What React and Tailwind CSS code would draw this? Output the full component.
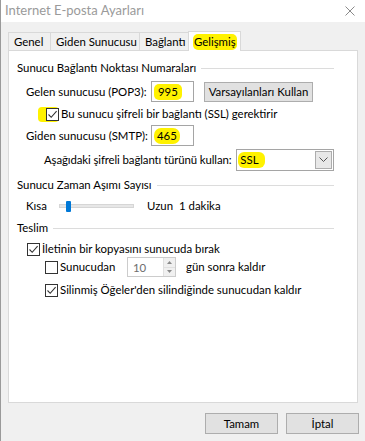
import React from 'react';

// Small building blocks for the Windows-style dialog
function Check({ checked }) {
  return (
    <span className="w-[13px] h-[13px] border border-[#333] bg-white flex items-center justify-center shrink-0">
      {checked && (
        <svg width="11" height="11" viewBox="0 0 11 11">
          <path d="M1.5 5.5 L4.2 8.3 L9.6 2.2" fill="none" stroke="#333" strokeWidth="1.1" />
        </svg>
      )}
    </span>
  );
}

function GroupHeader({ children }) {
  return (
    <div className="flex items-center h-[16px]">
      <span>{children}</span>
      <div className="flex-1 h-px bg-[#dcdcdc] ml-[5px]" />
    </div>
  );
}

function Mark({ children, className = '' }) {
  return <span className={`bg-[#fff200] rounded-[5px] leading-[16px] ${className}`}>{children}</span>;
}

const tabs = [
  { label: 'Genel', w: 'w-[43px]' },
  { label: 'Giden Sunucusu', w: 'w-[90px]' },
  { label: 'Bağlantı', w: 'w-[50px]' },
];

export default function App() {
  return (
    <div className="w-[365px] h-[441px] bg-[#f0f0f0] text-[11.4px] text-black overflow-hidden whitespace-nowrap border-l border-[#9a9a9a] font-['Lato',sans-serif]">
      {/* title bar */}
      <div className="h-[22px] bg-white flex items-center justify-between pl-[4px] pr-[10px]">
        <span className="text-[#9a9a9a] text-[13px]">Internet E-posta Ayarları</span>
        <svg width="10" height="10" viewBox="0 0 10 10">
          <path d="M0.5 0.5 L9.5 9.5 M9.5 0.5 L0.5 9.5" stroke="#8a8a8a" strokeWidth="1" />
        </svg>
      </div>

      {/* tabs */}
      <div className="flex items-end pl-[7px] h-[28px]">
        {tabs.map((t) => (
          <div key={t.label} className={`h-[18px] ${t.w} pl-[5px] flex items-center border border-b-0 border-[#d9d9d9] -ml-px first:ml-0 bg-[#f0f0f0]`}>
            {t.label}
          </div>
        ))}
        <div className="h-[20px] w-[53px] flex items-center pl-[4px] border border-b-0 border-[#d9d9d9] -ml-px bg-white relative z-10 -mb-px">
          <Mark className="px-[1px]">Gelişmiş</Mark>
        </div>
      </div>

      {/* page */}
      <div className="mx-[7px] h-[353px] bg-white border border-[#d9d9d9] pl-[8px] pr-[23px] pt-[9px]">
        <GroupHeader>Sunucu Bağlantı Noktası Numaraları</GroupHeader>

        <div className="flex items-center mt-[5px] pl-[9px]">
          <span className="w-[125px]">Gelen sunucusu (POP3):</span>
          <div className="w-[43px] h-[21px] border border-[#a5a5a5] flex items-center pl-[2px]">
            <Mark className="px-[4px]">995</Mark>
          </div>
          <div className="ml-[10px] w-[109px] h-[20px] bg-[#e1e1e1] border border-[#adadad] flex items-center justify-center">
            Varsayılanları Kullan
          </div>
        </div>

        <div className="flex items-center mt-[5px] h-[14px] pl-[21px]">
          <span className="bg-[#fff200] rounded-[4px] pl-[8px] py-[1px] flex">
            <Check checked />
          </span>
          <span className="ml-[2px]">Bu sunucu şifreli bir bağlantı (SSL) gerektirir</span>
        </div>

        <div className="flex items-center mt-[4px] pl-[9px]">
          <span className="w-[125px]">Giden sunucusu (SMTP):</span>
          <div className="w-[43px] h-[21px] border border-[#a5a5a5] flex items-center pl-[2px]">
            <Mark className="px-[3px] rounded-[7px]">465</Mark>
          </div>
        </div>

        <div className="flex items-center mt-[3px] pl-[27px]">
          <span className="w-[193px] tracking-[-0.1px]">Aşağıdaki şifreli bağlantı türünü kullan:</span>
          <div className="w-[98px] h-[22px] border border-[#a5a5a5] flex items-center justify-between pl-[1px] pr-[1px]">
            <Mark className="px-[2px] pr-[6px] rounded-[6px]">SSL</Mark>
            <div className="w-[17px] h-[18px] border border-[#adadad] bg-[#e8e8e8] flex items-center justify-center">
              <svg width="9" height="6" viewBox="0 0 9 6">
                <path d="M0.5 0.5 L4.5 4.5 L8.5 0.5" fill="none" stroke="#555" strokeWidth="1" />
              </svg>
            </div>
          </div>
        </div>

        <div className="mt-[6px]">
          <GroupHeader>Sunucu Zaman Aşımı Sayısı</GroupHeader>
        </div>

        <div className="flex items-center mt-[5px] h-[16px] pl-[9px]">
          <span className="w-[33px]">Kısa</span>
          <div className="w-[75px] h-[4px] bg-[#e7e7e7] border border-[#d6d6d6] relative flex items-center">
            <div className="ml-[6px] w-[5px] h-[11px] bg-[#0078d7] rounded-[1px]" />
          </div>
          <span className="ml-[13px]">Uzun</span>
          <span className="ml-[6px]">1 dakika</span>
        </div>

        <div className="mt-[6px]">
          <GroupHeader>Teslim</GroupHeader>
        </div>

        <div className="flex items-center mt-[6px] h-[14px] pl-[10px]">
          <Check checked />
          <span className="ml-[2px]">İletinin bir kopyasını sunucuda bırak</span>
        </div>

        <div className="flex items-center mt-[1px] h-[20px] pl-[28px]">
          <Check />
          <span className="ml-[2px] w-[67px]">Sunucudan</span>
          <div className="w-[49px] h-[20px] border border-[#cccccc] flex items-center justify-between">
            <span className="pl-[5px] text-[#6d6d6d] pt-[2px]">10</span>
            <div className="w-[12px] h-full flex flex-col border-l border-[#e0e0e0]">
              <div className="flex-1 bg-[#f0f0f0] border-b border-[#e0e0e0] flex items-center justify-center">
                <svg width="5" height="3" viewBox="0 0 5 3"><path d="M0 3 L2.5 0 L5 3 Z" fill="#8a8a8a" /></svg>
              </div>
              <div className="flex-1 bg-[#f0f0f0] flex items-center justify-center">
                <svg width="5" height="3" viewBox="0 0 5 3"><path d="M0 0 L2.5 3 L5 0 Z" fill="#8a8a8a" /></svg>
              </div>
            </div>
          </div>
          <span className="ml-[10px]">gün sonra kaldır</span>
        </div>

        <div className="flex items-center mt-[6px] h-[14px] pl-[28px]">
          <Check checked />
          <span className="ml-[2px]">Silinmiş Öğeler'den silindiğinde sunucudan kaldır</span>
        </div>
      </div>

      {/* dialog buttons */}
      <div className="flex justify-end gap-[8px] pr-[6px] mt-[10px]">
        <div className="w-[73px] h-[21px] bg-[#e1e1e1] border border-[#adadad] flex items-center justify-center">Tamam</div>
        <div className="w-[73px] h-[21px] bg-[#e1e1e1] border border-[#adadad] flex items-center justify-center">İptal</div>
      </div>
    </div>
  );
}
